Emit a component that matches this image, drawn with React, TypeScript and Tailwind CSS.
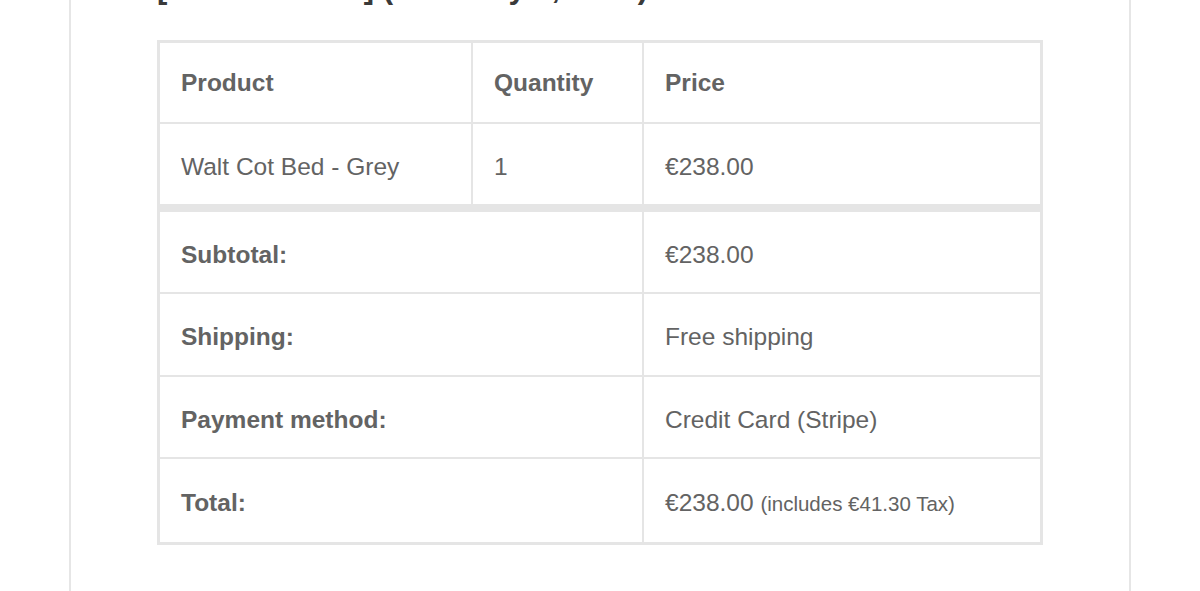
import React from "react";

const font = { fontFamily: '"Liberation Sans", Arial, Helvetica, sans-serif' };

function Cell({ w, children, bold, last, pt }: { w?: string; children: React.ReactNode; bold?: boolean; last?: boolean; pt?: boolean }) {
  return (
    <div
      className={`${w ?? "flex-1"} ${last ? "" : "border-r-2"} ${pt ? "pt-[5px]" : ""} border-[#e5e5e5] flex items-center pl-[21px] ${bold ? "font-bold" : ""}`}
    >
      {children}
    </div>
  );
}

export default function App() {
  return (
    <div className="w-[1200px] h-[591px] overflow-hidden bg-white" style={font}>
      <div className="ml-[69px] w-[1062px] h-[591px] border-x-2 border-[#e6e6e6] px-[86px] flex flex-col">
        <h2 className="mt-[-30px] mb-[34px] text-[31px] leading-[36px] font-bold text-[#3a3a3a] whitespace-nowrap">
          [Order #10482] (February 5, 2020)
        </h2>
        <div className="w-[886px] border-[3px] border-[#e5e5e5] text-[#636363] text-[24.5px] leading-[30px]">
          <div className="flex h-[81px] border-b-2 border-[#e5e5e5]">
            <Cell w="w-[313px]" bold>Product</Cell>
            <Cell w="w-[171px]" bold>Quantity</Cell>
            <Cell bold last>Price</Cell>
          </div>
          <div className="flex h-[88px] border-b-[8px] border-[#e5e5e5]">
            <Cell w="w-[313px]" pt>Walt Cot Bed - Grey</Cell>
            <Cell w="w-[171px]" pt>1</Cell>
            <Cell last pt>€238.00</Cell>
          </div>
          <div className="flex h-[82px] border-b-2 border-[#e5e5e5]">
            <Cell w="w-[484px]" bold pt>Subtotal:</Cell>
            <Cell last pt>€238.00</Cell>
          </div>
          <div className="flex h-[83px] border-b-2 border-[#e5e5e5]">
            <Cell w="w-[484px]" bold pt>Shipping:</Cell>
            <Cell last pt>Free shipping</Cell>
          </div>
          <div className="flex h-[82px] border-b-2 border-[#e5e5e5]">
            <Cell w="w-[484px]" bold pt>Payment method:</Cell>
            <Cell last pt>Credit Card (Stripe)</Cell>
          </div>
          <div className="flex h-[83px]">
            <Cell w="w-[484px]" bold pt>Total:</Cell>
            <Cell last pt>
              <span>
                €238.00 <span className="text-[20.5px]">(includes €41.30 Tax)</span>
              </span>
            </Cell>
          </div>
        </div>
      </div>
    </div>
  );
}
